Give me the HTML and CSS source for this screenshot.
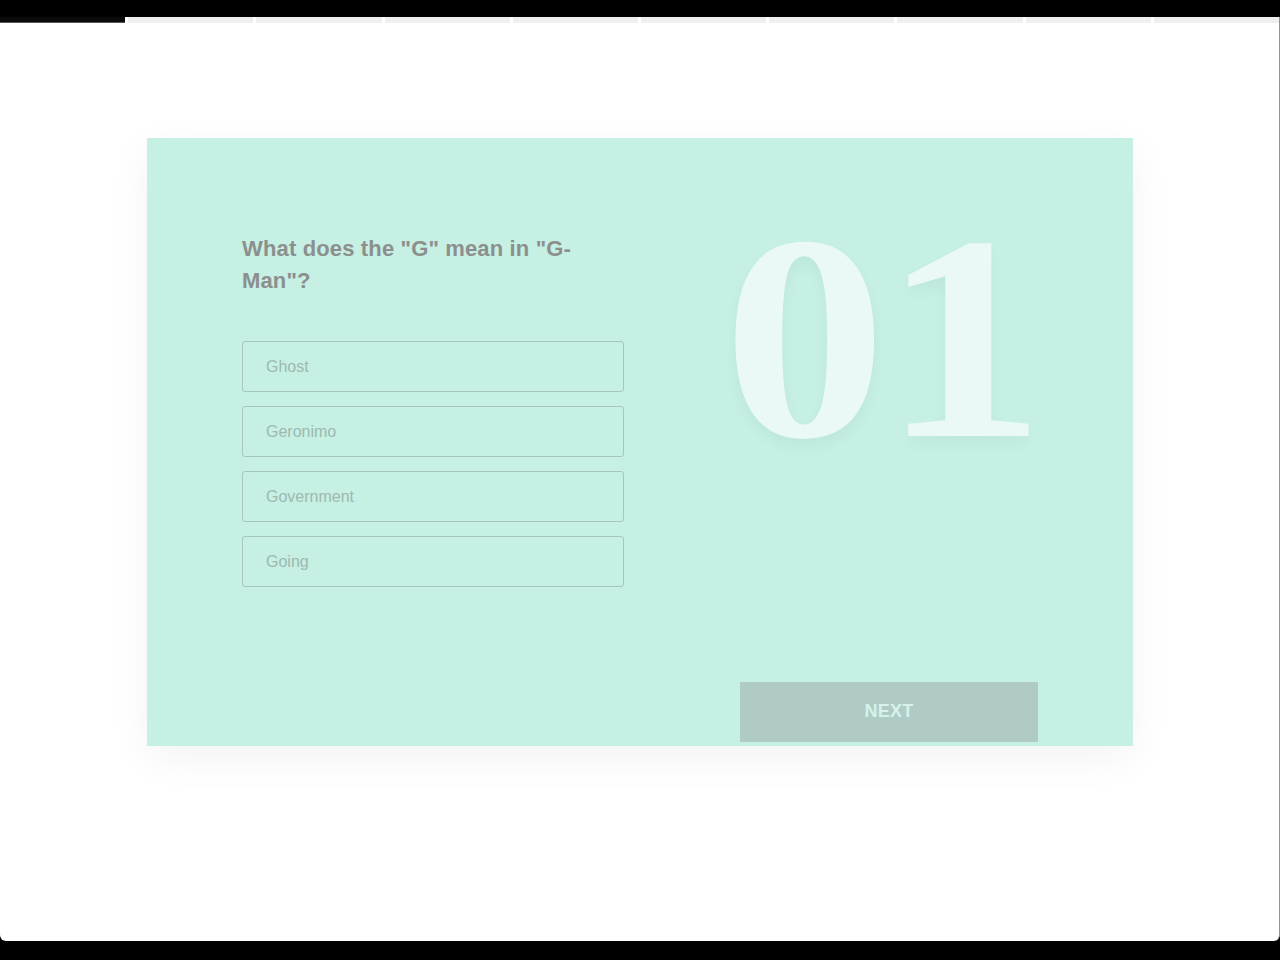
FILE: index.html
```html
<!DOCTYPE html>
<html lang="en">
<head>
<meta charset="utf-8">
<title>Quiz</title>
<link rel="stylesheet" href="styles.css">
</head>
<body>
<div class="frame">
  <div class="progress">
    <span class="seg seg-done"></span>
    <span class="seg"></span>
    <span class="seg"></span>
    <span class="seg"></span>
    <span class="seg"></span>
    <span class="seg"></span>
    <span class="seg"></span>
    <span class="seg"></span>
    <span class="seg"></span>
    <span class="seg"></span>
  </div>
  <main class="stage">
    <section class="card">
      <div class="left">
        <h2 class="question">What does the "G" mean in "G-Man"?</h2>
        <div class="options">
          <div class="option">Ghost</div>
          <div class="option">Geronimo</div>
          <div class="option">Government</div>
          <div class="option">Going</div>
        </div>
      </div>
      <div class="right">
        <div class="number">01</div>
        <button class="next">NEXT</button>
      </div>
    </section>
  </main>
</div>
</body>
</html>
```

FILE: styles.css
```css
html, body {
  margin: 0;
  padding: 0;
  background: #000;
}

body {
  font-family: "Liberation Sans", Arial, sans-serif;
  padding-top: 17px;
  height: 960px;
  box-sizing: border-box;
  overflow: hidden;
}

.frame {
  height: 924px;
  background: #fff;
  border-radius: 0 0 6px 6px;
  border-right: 1px solid #8c9698;
  box-sizing: border-box;
}

.progress {
  display: flex;
  gap: 3px;
  height: 6px;
}

.seg {
  flex: 1;
  background: #efefef;
}

.seg-done {
  background: #0a0a0a;
  border-bottom: 1px solid #555;
}

.stage {
  padding-top: 115px;
}

.card {
  width: 986px;
  height: 608px;
  margin-left: 147px;
  box-sizing: border-box;
  background: #c5f0e3;
  box-shadow: 0 12px 40px rgba(0, 0, 0, 0.05);
  padding: 96px 95px 4px;
  display: grid;
  grid-template-columns: 382px 298px;
  justify-content: space-between;
}

.question {
  margin: -1px 0 0;
  font-size: 22px;
  line-height: 32px;
  font-weight: 700;
  letter-spacing: 0.15px;
  color: #8c8f8d;
}

.options {
  margin-top: 44px;
  display: flex;
  flex-direction: column;
  gap: 14px;
}

.option {
  height: 51px;
  box-sizing: border-box;
  border: 1px solid #a6c6bc;
  border-radius: 3px;
  padding-left: 23px;
  display: flex;
  align-items: center;
  font-size: 16px;
  color: #9fb8b0;
}

.right {
  display: flex;
  flex-direction: column;
  justify-content: space-between;
}

.number {
  font-family: "Liberation Serif", "Times New Roman", serif;
  font-weight: 700;
  font-size: 292px;
  line-height: 217px;
  margin-top: -5px;
  text-align: center;
  color: #eaf9f5;
  text-shadow: 0 8px 14px rgba(0, 0, 0, 0.04);
  letter-spacing: -4px;
  transform: translateX(-7px) scaleX(1.12);
}

.next {
  height: 60px;
  width: 298px;
  border: 0;
  background: #b0cbc5;
  color: #d6f2eb;
  font-family: "Liberation Sans", Arial, sans-serif;
  font-size: 18px;
  font-weight: 700;
  letter-spacing: 0.3px;
  padding: 0 0 2px;
}
```
